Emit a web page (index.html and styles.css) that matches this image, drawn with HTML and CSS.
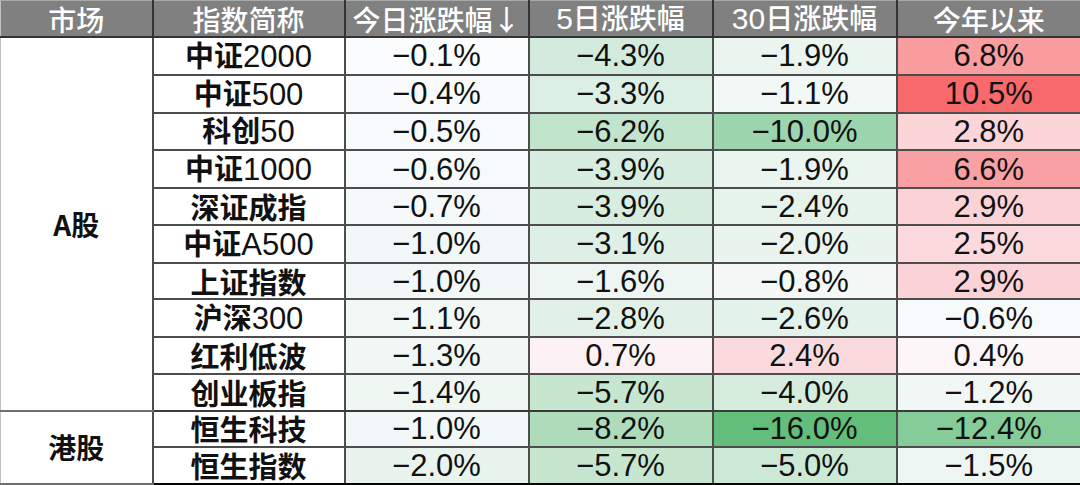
FILE: index.html
```html
<!DOCTYPE html>
<html lang="zh-CN">
<head>
<meta charset="utf-8">
<title>指数涨跌幅</title>
<link rel="stylesheet" href="styles.css">
</head>
<body>
<table class="board">
  <colgroup>
    <col class="c-market"><col class="c-name"><col class="c-val"><col class="c-val"><col class="c-val"><col class="c-val">
  </colgroup>
  <thead>
    <tr>
      <th>市场</th><th>指数简称</th><th>今日涨跌幅↓</th><th><span class="lat">5</span>日涨跌幅</th><th><span class="lat">30</span>日涨跌幅</th><th>今年以来</th>
    </tr>
  </thead>
  <tbody>
    <tr>
      <td class="market" rowspan="10">A股</td>
      <td class="name">中证<span class="lat">2000</span></td>
      <td style="background:rgb(251,252,254)">−0.1%</td>
      <td style="background:rgb(211,235,220)">−4.3%</td>
      <td style="background:rgb(234,245,239)">−1.9%</td>
      <td style="background:rgb(249,157,159)">6.8%</td>
    </tr>
    <tr>
      <td class="name">中证<span class="lat">500</span></td>
      <td style="background:rgb(248,250,252)">−0.4%</td>
      <td style="background:rgb(220,239,228)">−3.3%</td>
      <td style="background:rgb(241,248,246)">−1.1%</td>
      <td style="background:rgb(248,105,107)">10.5%</td>
    </tr>
    <tr>
      <td class="name">科创<span class="lat">50</span></td>
      <td style="background:rgb(247,250,251)">−0.5%</td>
      <td style="background:rgb(193,228,204)">−6.2%</td>
      <td style="background:rgb(156,213,173)">−10.0%</td>
      <td style="background:rgb(251,213,216)">2.8%</td>
    </tr>
    <tr>
      <td class="name">中证<span class="lat">1000</span></td>
      <td style="background:rgb(246,250,250)">−0.6%</td>
      <td style="background:rgb(215,237,223)">−3.9%</td>
      <td style="background:rgb(234,245,239)">−1.9%</td>
      <td style="background:rgb(249,160,162)">6.6%</td>
    </tr>
    <tr>
      <td class="name">深证成指</td>
      <td style="background:rgb(245,249,249)">−0.7%</td>
      <td style="background:rgb(215,237,223)">−3.9%</td>
      <td style="background:rgb(229,243,235)">−2.4%</td>
      <td style="background:rgb(251,211,214)">2.9%</td>
    </tr>
    <tr>
      <td class="name">中证<span class="lat">A500</span></td>
      <td style="background:rgb(242,248,247)">−1.0%</td>
      <td style="background:rgb(222,240,229)">−3.1%</td>
      <td style="background:rgb(233,244,239)">−2.0%</td>
      <td style="background:rgb(251,217,220)">2.5%</td>
    </tr>
    <tr>
      <td class="name">上证指数</td>
      <td style="background:rgb(242,248,247)">−1.0%</td>
      <td style="background:rgb(237,246,242)">−1.6%</td>
      <td style="background:rgb(244,249,248)">−0.8%</td>
      <td style="background:rgb(251,211,214)">2.9%</td>
    </tr>
    <tr>
      <td class="name">沪深<span class="lat">300</span></td>
      <td style="background:rgb(241,248,246)">−1.1%</td>
      <td style="background:rgb(225,241,232)">−2.8%</td>
      <td style="background:rgb(227,242,234)">−2.6%</td>
      <td style="background:rgb(246,250,250)">−0.6%</td>
    </tr>
    <tr>
      <td class="name">红利低波</td>
      <td style="background:rgb(240,247,244)">−1.3%</td>
      <td style="background:rgb(252,242,245)">0.7%</td>
      <td style="background:rgb(251,218,221)">2.4%</td>
      <td style="background:rgb(252,246,249)">0.4%</td>
    </tr>
    <tr class="group-end">
      <td class="name">创业板指</td>
      <td style="background:rgb(239,247,243)">−1.4%</td>
      <td style="background:rgb(198,230,208)">−5.7%</td>
      <td style="background:rgb(214,237,222)">−4.0%</td>
      <td style="background:rgb(241,247,245)">−1.2%</td>
    </tr>
    <tr>
      <td class="market" rowspan="2">港股</td>
      <td class="name">恒生科技</td>
      <td style="background:rgb(242,248,247)">−1.0%</td>
      <td style="background:rgb(174,220,187)">−8.2%</td>
      <td style="background:rgb(99,190,123)">−16.0%</td>
      <td style="background:rgb(133,204,153)">−12.4%</td>
    </tr>
    <tr>
      <td class="name">恒生指数</td>
      <td style="background:rgb(233,244,239)">−2.0%</td>
      <td style="background:rgb(198,230,208)">−5.7%</td>
      <td style="background:rgb(204,233,214)">−5.0%</td>
      <td style="background:rgb(238,246,243)">−1.5%</td>
    </tr>
  </tbody>
</table>
</body>
</html>
```

FILE: styles.css
```css
html, body {
  margin: 0;
  padding: 0;
  background: #ffffff;
}

.board {
  width: 1080px;
  height: 485px;
  table-layout: fixed;
  border-collapse: collapse;
  font-family: "Liberation Sans", "Noto Sans CJK SC", sans-serif;
  color: #111111;
}

.c-market { width: 152px; }
.c-name { width: 192px; }
.c-val { width: 184px; }

.board th {
  height: 35px;
  padding: 0;
  background: #808080;
  color: #ffffff;
  font-family: "Noto Sans CJK SC", sans-serif;
  font-weight: 500;
  font-size: 28px;
  line-height: 1;
  text-align: center;
  vertical-align: middle;
  border-top: 1px solid #a8a8a8;
  border-bottom: 2px solid #333333;
  border-right: 2px solid #333333;
}

.board th .lat {
  font-family: "Liberation Sans", sans-serif;
  font-size: 30px;
}

.board td {
  padding: 0;
  font-size: 31px;
  line-height: 1;
  text-align: center;
  vertical-align: middle;
  border: 2px solid #4d4d4d;
  background: #ffffff;
}

.board th:first-child,
.board td.market {
  border-left: 1px solid #c0c0c0;
}

.board th:last-child,
.board td:last-child {
  border-right: 1px solid #000000;
}

.board tbody tr:last-child td,
.board td.market:last-child {
  border-bottom: 2px solid #000000;
}

.board td.market {
  font-family: "Noto Sans CJK SC", sans-serif;
  font-weight: 700;
  font-size: 28px;
  border-top-color: #6e6e6e;
  border-bottom-color: #6e6e6e;
}

.board td.name {
  font-family: "Noto Sans CJK SC", sans-serif;
  font-weight: 700;
  font-size: 29px;
}

.board td.name .lat {
  font-family: "Liberation Sans", sans-serif;
  font-weight: 400;
  font-size: 31px;
}

.board tr.group-end td {
  border-bottom: 2px solid #3a3a3a;
}
```
